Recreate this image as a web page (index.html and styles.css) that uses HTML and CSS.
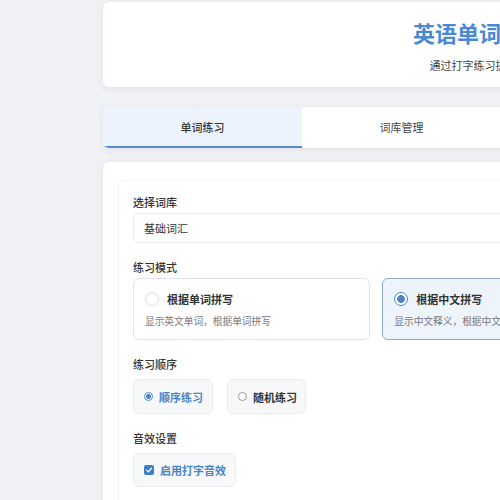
FILE: index.html
```html
<!DOCTYPE html>
<html lang="zh">
<head>
<meta charset="utf-8">
<title>英语单词打字练习</title>
<link rel="stylesheet" href="styles.css">
</head>
<body>
<div class="app">
  <header class="header card">
    <h1 class="title">英语单词打字练习</h1>
    <p class="subtitle">通过打字练习提高英语词汇量</p>
  </header>

  <nav class="tabs">
    <div class="tab active">单词练习</div>
    <div class="tab">词库管理</div>
    <div class="tab">学习统计</div>
    <div class="tab">设置</div>
  </nav>

  <main class="main card">
    <section class="panel">
      <div class="group">
        <div class="label">选择词库</div>
        <div class="select">基础词汇</div>
      </div>

      <div class="group">
        <div class="label">练习模式</div>
        <div class="modes">
          <div class="mode">
            <div class="mode-head"><span class="radio"></span><span class="mode-title">根据单词拼写</span></div>
            <div class="mode-desc">显示英文单词，根据单词拼写</div>
          </div>
          <div class="mode selected">
            <div class="mode-head"><span class="radio on"></span><span class="mode-title">根据中文拼写</span></div>
            <div class="mode-desc">显示中文释义，根据中文拼写英文单词</div>
          </div>
          <div class="mode">
            <div class="mode-head"><span class="radio"></span><span class="mode-title">听音拼写</span></div>
            <div class="mode-desc">播放单词发音，根据发音拼写</div>
          </div>
        </div>
      </div>

      <div class="group">
        <div class="label lab-order">练习顺序</div>
        <div class="options">
          <div class="opt active"><span class="sradio on"></span><span>顺序练习</span></div>
          <div class="opt"><span class="sradio"></span><span>随机练习</span></div>
        </div>
      </div>

      <div class="group">
        <div class="label lab-order">音效设置</div>
        <div class="options">
          <div class="opt active chk"><span class="check"><svg viewBox="0 0 10 10" width="8" height="8"><path d="M2 5.2 L4.2 7.3 L8 2.8" fill="none" stroke="#fff" stroke-width="1.6" stroke-linecap="round" stroke-linejoin="round"/></svg></span><span>启用打字音效</span></div>
        </div>
      </div>
    </section>
  </main>
</div>
</body>
</html>
```

FILE: styles.css
```css
* { box-sizing: border-box; }
html, body { margin: 0; padding: 0; }
body {
  background: #f1f2f6;
  font-family: "Noto Sans CJK SC", "Noto Sans", "Liberation Sans", sans-serif;
  color: #333;
  overflow: hidden;
}
.app {
  width: 796px;
  margin: 2px 0 0 103px;
}
.card {
  background: #fff;
  border-radius: 6px;
  box-shadow: 0 2px 8px rgba(0, 0, 0, 0.07);
}
.header {
  height: 85px;
  text-align: center;
  padding-top: 16px;
}
.title {
  margin: 0;
  font-size: 22px;
  line-height: 28px;
  font-weight: 700;
  color: #4a88d3;
}
.subtitle {
  margin: 11px 0 0;
  font-size: 11px;
  line-height: 16px;
  color: #444;
}
.tabs {
  margin-top: 20px;
  display: grid;
  grid-template-columns: repeat(4, 1fr);
  background: #fff;
  border-radius: 6px;
  box-shadow: 0 2px 8px rgba(0, 0, 0, 0.07);
  overflow: hidden;
  height: 41px;
}
.tab {
  display: flex;
  align-items: center;
  justify-content: center;
  font-size: 11px;
  color: #444;
  border-bottom: 2px solid transparent;
}
.tab.active {
  background: #edf3fc;
  color: #333;
  font-weight: 500;
  border-bottom-color: #5a8ad0;
}
.main {
  margin-top: 14px;
  padding: 18px 15px 15px;
  min-height: 400px;
}
.panel {
  border: 1px solid #f5f5f7;
  border-radius: 6px;
  padding: 13px 14px 20px;
  box-shadow: 0 1px 3px rgba(0, 0, 0, 0.025);
}
.group + .group { margin-top: 16px; }
.label {
  font-size: 11px;
  line-height: 16px;
  font-weight: 500;
  color: #333;
  margin-bottom: 3px;
}
.label.lab-order { margin-bottom: 7px; }
.select {
  height: 30px;
  border: 1px solid #ebebee;
  border-radius: 5px;
  padding: 0 10px;
  display: flex;
  align-items: center;
  font-size: 11px;
  color: #333;
}
.modes {
  display: grid;
  grid-template-columns: repeat(3, 1fr);
  gap: 12px;
  margin-top: 1px;
}
.mode {
  height: 62px;
  border: 1px solid #e3e4e8;
  border-radius: 6px;
  padding: 12px 11px 0;
  background: #fff;
}
.mode.selected {
  background: #eef4fc;
  border-color: #8eaacb;
}
.mode-head {
  display: flex;
  align-items: center;
  gap: 8px;
  height: 16px;
}
.mode-title {
  font-size: 11px;
  font-weight: 700;
  color: #333;
}
.mode-desc {
  margin-top: 7px;
  font-size: 9.7px;
  line-height: 14px;
  color: #777;
  white-space: nowrap;
}
.radio {
  width: 14px;
  height: 14px;
  border-radius: 50%;
  border: 1px solid #dcdde0;
  background: #fff;
  flex: none;
}
.radio.on {
  border: 1.5px solid #4a86cf;
  background: radial-gradient(circle, #4a86cf 0 3.6px, #fff 4.1px);
}
.options {
  display: flex;
  gap: 14px;
}
.opt {
  height: 35px;
  padding: 0 9px 0 10px;
  display: flex;
  align-items: center;
  gap: 6px;
  background: #f7f8fa;
  border: 1px solid #ececef;
  border-radius: 6px;
  font-size: 11px;
  font-weight: 700;
  color: #333;
  white-space: nowrap;
}
.opt + .opt { padding-right: 8px; }
.opt.active { color: #4a84c8; }
.opt.chk { height: 34px; padding: 0 9px 0 10px; }
.sradio {
  width: 9px;
  height: 9px;
  border-radius: 50%;
  border: 1px solid #9a9a9a;
  background: #fff;
  flex: none;
}
.sradio.on {
  border-color: #4a86cf;
  background: radial-gradient(circle, #4a86cf 0 2.2px, #fff 2.7px);
}
.opt .check {
  width: 10px;
  height: 10px;
  border-radius: 2px;
  background: #3f7cc4;
  display: flex;
  align-items: center;
  justify-content: center;
  flex: none;
}
```
